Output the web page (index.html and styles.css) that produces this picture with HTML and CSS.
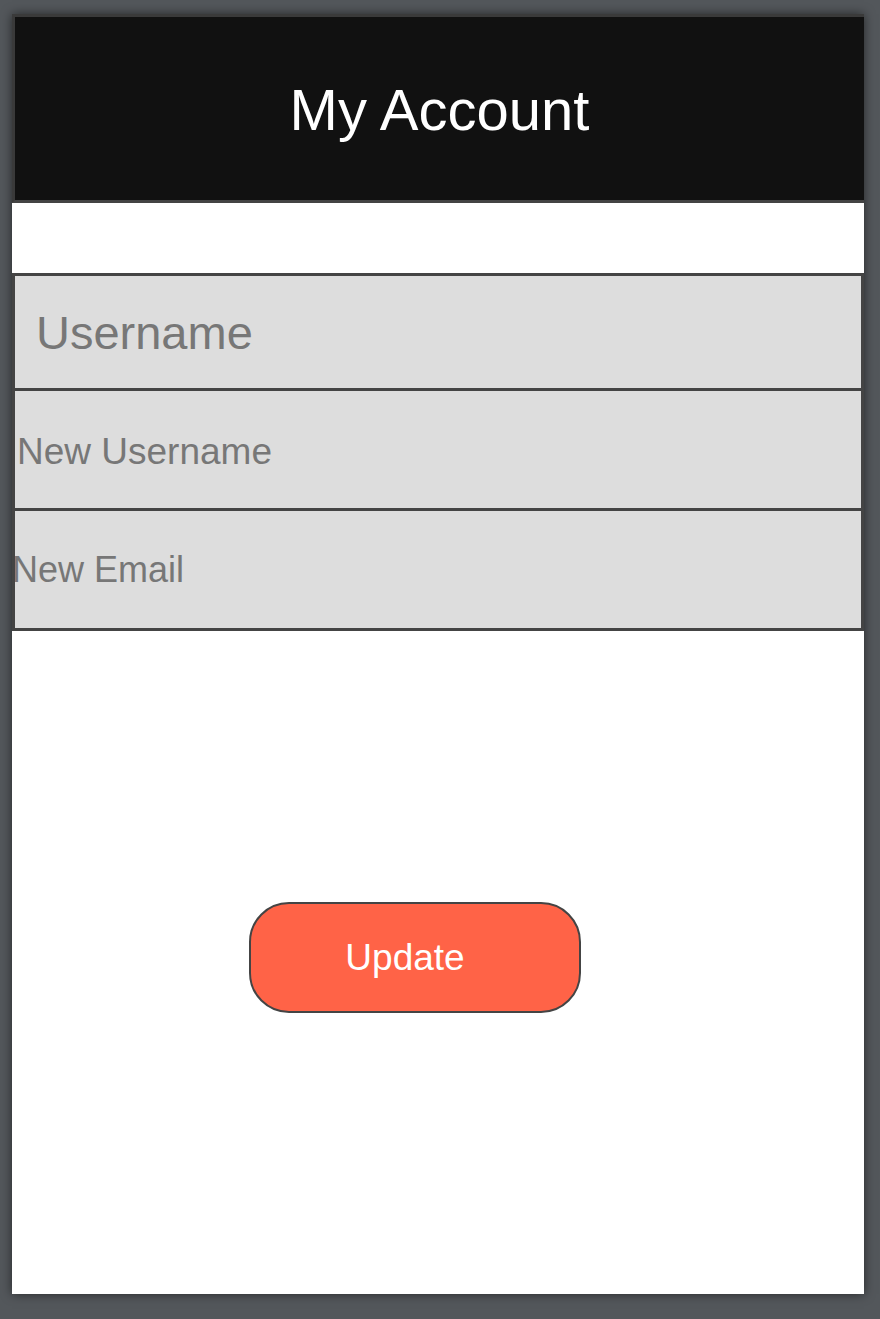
FILE: index.html
```html
<!DOCTYPE html>
<html lang="en">
<head>
    <meta charset="UTF-8">
    <meta name="viewport" content="width=device-width, initial-scale=1.0">
    <title>My Account</title>
    <link rel="stylesheet" href="styles.css">
</head>
<body>
    <div class="screen">
        <div class="header">
            <h1>My Account</h1>
        </div>

        <div class="fields">
            <input type="text" class="field field-main" placeholder="Username">
            <input type="text" class="field field-user" placeholder="New Username">
            <input type="email" class="field field-email" placeholder="New Email">
        </div>

        <button class="update-btn">Update</button>
    </div>
</body>
</html>
```

FILE: styles.css
```css
html, body {
    margin: 0;
    padding: 0;
}
body {
    font-family: "Liberation Sans", Arial, sans-serif;
    background-color: #53575b;
    padding: 14px 16px 25px 12px;
}
.screen {
    width: 852px;
    height: 1280px;
    background: white;
    box-shadow: 0 0 10px rgba(0, 0, 0, 0.55);
    overflow: hidden;
}
.header {
    height: 183px;
    background: #111111;
    border-top: 3px solid #3a3a3a;
    border-left: 3px solid #3a3a3a;
    border-bottom: 3px solid #444444;
    display: flex;
    align-items: center;
    justify-content: center;
}
.header h1 {
    margin: 0;
    color: white;
    font-weight: normal;
    font-size: 58px;
    margin-top: 2px;
}
.fields {
    margin-top: 70px;
}
.field {
    display: block;
    width: 100%;
    box-sizing: border-box;
    margin: 0;
    background: #dddddd;
    border: 3px solid #444444;
    border-top: none;
    font-family: "Liberation Sans", Arial, sans-serif;
    color: #777777;
    outline: none;
}
.field::placeholder {
    color: #777777;
    opacity: 1;
}
.field-main {
    border-top: 3px solid #444444;
    height: 118px;
    font-size: 47px;
    padding: 0 0 0 21px;
}
.field-user {
    height: 120px;
    font-size: 37px;
    padding: 4px 0 0 2px;
}
.field-email {
    height: 120px;
    font-size: 36px;
    padding: 0 0 0 0;
    text-indent: -3px;
}
.update-btn {
    display: block;
    margin: 271px 0 0 237px;
    width: 332px;
    height: 111px;
    background: #ff6347;
    border: 2px solid #444444;
    border-radius: 40px;
    color: white;
    font-family: "Liberation Sans", Arial, sans-serif;
    font-size: 37px;
    padding: 0 20px 0 0;
    cursor: pointer;
}
```
